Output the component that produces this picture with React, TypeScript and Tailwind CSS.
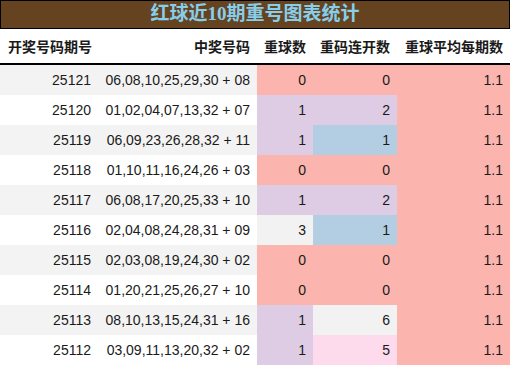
const rows = [
  { q: "25121", n: "06,08,10,25,29,30 + 08", a: "0", ac: "bg-[#fbb4ae]", b: "0", bc: "bg-[#fbb4ae]" },
  { q: "25120", n: "01,02,04,07,13,32 + 07", a: "1", ac: "bg-[#decbe4]", b: "2", bc: "bg-[#decbe4]" },
  { q: "25119", n: "06,09,23,26,28,32 + 11", a: "1", ac: "bg-[#decbe4]", b: "1", bc: "bg-[#b3cde3]" },
  { q: "25118", n: "01,10,11,16,24,26 + 03", a: "0", ac: "bg-[#fbb4ae]", b: "0", bc: "bg-[#fbb4ae]" },
  { q: "25117", n: "06,08,17,20,25,33 + 10", a: "1", ac: "bg-[#decbe4]", b: "2", bc: "bg-[#decbe4]" },
  { q: "25116", n: "02,04,08,24,28,31 + 09", a: "3", ac: "bg-[#f2f2f2]", b: "1", bc: "bg-[#b3cde3]" },
  { q: "25115", n: "02,03,08,19,24,30 + 02", a: "0", ac: "bg-[#fbb4ae]", b: "0", bc: "bg-[#fbb4ae]" },
  { q: "25114", n: "01,20,21,25,26,27 + 10", a: "0", ac: "bg-[#fbb4ae]", b: "0", bc: "bg-[#fbb4ae]" },
  { q: "25113", n: "08,10,13,15,24,31 + 16", a: "1", ac: "bg-[#decbe4]", b: "6", bc: "bg-[#f2f2f2]" },
  { q: "25112", n: "03,09,11,13,20,32 + 02", a: "1", ac: "bg-[#decbe4]", b: "5", bc: "bg-[#fddaec]" },
];

const gridCols = `grid grid-cols-[98px_159px_56px_84px_113px]`;
const cell = `flex items-center justify-end pr-[7px]`;

const App = () => {
  return (
    <div className="w-[510px] h-[366px] bg-white text-[14px] text-[#1a1a1a] font-['Liberation_Sans','Noto_Sans_CJK_SC',sans-serif]">
      <div className="h-[29px] bg-[#654321] border border-black flex items-center justify-center text-[#87ceeb] font-bold text-[19px] font-['Liberation_Serif','Noto_Sans_CJK_SC',serif]">
        红球近10期重号图表统计
      </div>
      <div className={`${gridCols} h-[36px] pt-[3px] border-b-2 border-black font-bold`}>
        <div className="flex items-center pl-[8px]">开奖号码期号</div>
        <div className={cell}>中奖号码</div>
        <div className={cell}>重球数</div>
        <div className={cell}>重码连开数</div>
        <div className={cell}>重球平均每期数</div>
      </div>
      {rows.map((r, i) => (
        <div
          key={r.q}
          className={`${gridCols} h-[30px] ${i % 2 === 0 ? "bg-[#f3f3f3]" : "bg-white"}`}
        >
          <div className={cell}>{r.q}</div>
          <div className={cell}>{r.n}</div>
          <div className={`${cell} ${r.ac}`}>{r.a}</div>
          <div className={`${cell} ${r.bc}`}>{r.b}</div>
          <div className={`${cell} bg-[#fbb4ae]`}>1.1</div>
        </div>
      ))}
    </div>
  );
};

export default App;
